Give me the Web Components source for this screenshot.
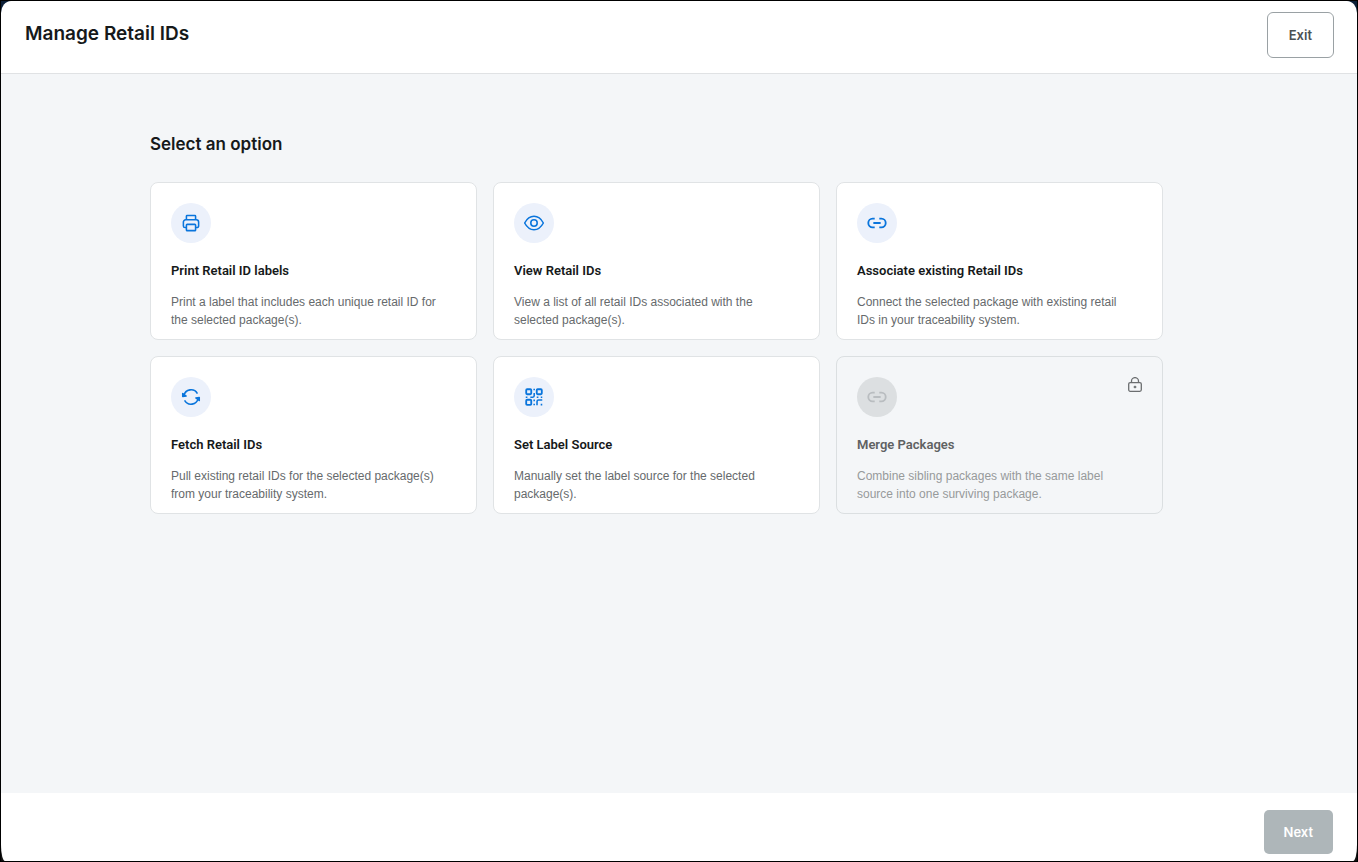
<!DOCTYPE html>
<html lang="en">
<head>
<meta charset="utf-8">
<meta name="viewport" content="width=device-width, initial-scale=1">
<title>Manage Retail IDs</title>
<style>
body{
    margin:0;
    font-family:Inter, "Liberation Sans", sans-serif;
    color:#16191a;
    background-color:#0b1f38;
}
</style>
</head>
<body>
<retail-dialog>
    <span slot="title">Manage Retail IDs</span>
    <action-button slot="exit">Exit</action-button>
    <option-list>
        <span slot="heading">Select an option</span>
        <option-card icon="print">
            <span slot="title">Print Retail ID labels</span>
            Print a label that includes each unique retail ID for the selected package(s).
        </option-card>
        <option-card icon="eye">
            <span slot="title">View Retail IDs</span>
            View a list of all retail IDs associated with the selected package(s).
        </option-card>
        <option-card icon="link">
            <span slot="title">Associate existing Retail IDs</span>
            Connect the selected package with existing retail IDs in your traceability system.
        </option-card>
        <option-card icon="sync">
            <span slot="title">Fetch Retail IDs</span>
            Pull existing retail IDs for the selected package(s) from your traceability system.
        </option-card>
        <option-card icon="qr">
            <span slot="title">Set Label Source</span>
            Manually set the label source for the selected package(s).
        </option-card>
        <option-card icon="link" disabled>
            <span slot="title">Merge Packages</span>
            Combine sibling packages with the same label source into one surviving package.
        </option-card>
    </option-list>
    <action-button slot="next" disabled>Next</action-button>
</retail-dialog>

<script>
const icons={
    print:`<path d="M7 8V4.500a.75.75 0 0 1 .75-.75h8.500a.75.75 0 0 1 .75.75V8"/>
        <path d="M7 17H5.500a1.800 1.800 0 0 1-1.800-1.800V11A2.500 2.500 0 0 1 6.200 8.500h11.600a2.500 2.500 0 0 1 2.500 2.500v4.200a1.800 1.800 0 0 1-1.800 1.800H17"/>
        <rect x="7" y="13.500" width="10" height="6.800" rx=".8"/>`,
    eye:`<path d="M1.800 12C4.300 7.300 8 4.700 12 4.700s7.700 2.600 10.200 7.300c-2.500 4.700-6.200 7.300-10.200 7.300S4.300 16.700 1.800 12Z"/>
        <circle cx="12" cy="12" r="3.500"/>`,
    link:`<path stroke-width="2" d="M9.500 7.300H7.200a4.700 4.700 0 0 0 0 9.400h2.300M14.500 7.300h2.300a4.700 4.700 0 0 1 0 9.400h-2.300M8 12h8"/>`,
    sync:`<path d="M4.200 10.500A8 8 0 0 1 19 8.200M19.800 13.500A8 8 0 0 1 5 15.800"/>
        <path fill="currentColor" d="M3 8.200v3.300l3.700-.5ZM21 15.800v-3.300l-3.700.5Z"/>`,
    qr:`<g stroke-width="2"><rect x="3.500" y="3.500" width="5.500" height="5.500" rx="1"/>
        <rect x="15" y="3.500" width="5.500" height="5.500" rx="1"/>
        <rect x="3.500" y="15" width="5.500" height="5.500" rx="1"/></g>
        <path d="M12.200 3v1.600M12.200 7.500v3.200a1.500 1.500 0 0 1-1.500 1.500H8M3 12.200h1.800M15 12.200h1.800M19.400 12.200H21M12.200 14.800v1.700M12.200 19.300V21M15.300 21v-4a1.700 1.700 0 0 1 1.700-1.700h4M19.300 20.300H21"/>`
};

const buttonTemplate=document.createElement("template");
buttonTemplate.innerHTML=`
<style>
:host{
    display:block;
}
button{
    display:block;
    height:46px;
    padding:0 21px;
    border:1px solid #9aa1a4;
    border-radius:6px;
    background-color:#fff;
    color:#4a5154;
    font:600 13px/20px Inter, "Liberation Sans", sans-serif;
    cursor:pointer;
}
button:disabled{
    height:44px;
    padding:0 20px;
    border:0;
    border-radius:5px;
    background-color:#aeb6b9;
    color:#fff;
    cursor:default;
}
</style>
<button type="button"><slot></slot></button>`;

class ActionButton extends HTMLElement{
    constructor(){
        super();
        this.attachShadow({mode:'open'});
        this.shadowRoot.appendChild(buttonTemplate.content.cloneNode(true));
        this.shadowRoot.querySelector('button').disabled=this.hasAttribute('disabled');
    }
}

const cardTemplate=document.createElement("template");
cardTemplate.innerHTML=`
<style>
:host{
    display:grid;
}
button{
    display:flex;
    flex-direction:column;
    align-items:stretch;
    justify-content:flex-start;
    padding:20px 20px 10px;
    border:1px solid #e0e3e5;
    border-radius:8px;
    background-color:#fff;
    color:#16191a;
    font-family:"Liberation Sans", Arial, sans-serif;
    text-align:left;
    cursor:pointer;
}
.top{
    display:flex;
    justify-content:space-between;
    align-items:flex-start;
    margin-bottom:18px;
}
.circle{
    display:flex;
    align-items:center;
    justify-content:center;
    width:40px;
    height:40px;
    border-radius:50%;
    background-color:#ecf1fb;
    color:#0a75dc;
}
svg{
    display:block;
    fill:none;
    stroke:currentColor;
    stroke-width:1.700;
    stroke-linejoin:round;
}
.lock{
    display:none;
    color:#6b6e70;
}
.title{
    margin-bottom:12px;
    font-family:Roboto, "Liberation Sans", sans-serif;
    font-size:13px;
    line-height:20px;
    font-weight:600;
}
.text{
    padding-right:12px;
    font-size:12px;
    line-height:18px;
    color:#666a6c;
}
button:disabled{
    background-color:#f4f6f8;
    border-color:#dbdfe1;
    color:#5f6263;
    cursor:default;
}
button:disabled .circle{
    background-color:#dcdfe1;
    color:#b9bdc0;
}
button:disabled .lock{
    display:block;
}
button:disabled .text{
    color:#979a9b;
}
</style>
<button type="button">
    <span class="top">
        <span class="circle"><svg class="icon" width="22" height="22" viewBox="0 0 24 24" aria-hidden="true"></svg></span>
        <svg class="lock" width="14" height="15" viewBox="0 0 14 15" aria-hidden="true">
            <g stroke-width="1.300">
                <rect x=".7" y="5.600" width="12.600" height="8.700" rx="1.500"/>
                <path d="M3.500 5.600V4.100a3.500 3.500 0 0 1 7 0v1.500M7 8.700v2.600M5.700 10h2.600"/>
            </g>
        </svg>
    </span>
    <span class="title"><slot name="title"></slot></span>
    <span class="text"><slot></slot></span>
</button>`;

class OptionCard extends HTMLElement{
    constructor(){
        super();
        this.attachShadow({mode:'open'});
        this.shadowRoot.appendChild(cardTemplate.content.cloneNode(true));
        this.shadowRoot.querySelector('.icon').innerHTML=icons[this.getAttribute('icon')];
        this.shadowRoot.querySelector('button').disabled=this.hasAttribute('disabled');
    }
}

const listTemplate=document.createElement("template");
listTemplate.innerHTML=`
<style>
:host{
    display:block;
    padding:58px 194px 58px 149px;
}
h2{
    margin:0 0 26px;
    font-size:17px;
    line-height:24px;
    font-weight:600;
}
.grid{
    display:grid;
    grid-template-columns:repeat(3, 1fr);
    gap:16px;
}
@media (max-width:1000px){
    :host{
        padding:32px 24px;
    }
    .grid{
        grid-template-columns:repeat(auto-fill, minmax(260px, 1fr));
    }
}
</style>
<h2><slot name="heading"></slot></h2>
<div class="grid"><slot></slot></div>`;

class OptionList extends HTMLElement{
    constructor(){
        super();
        this.attachShadow({mode:'open'});
        this.shadowRoot.appendChild(listTemplate.content.cloneNode(true));
    }
}

const dialogTemplate=document.createElement("template");
dialogTemplate.innerHTML=`
<style>
:host{
    display:flex;
    box-sizing:border-box;
    min-height:100vh;
    border:1px solid #000;
    background:linear-gradient(#0b1f38, #111);
}
.dialog{
    flex:1;
    display:flex;
    flex-direction:column;
    border-radius:10px 10px 4px 4px / 12px 12px 16px 16px;
    overflow:hidden;
    background-color:#fff;
}
header{
    display:flex;
    justify-content:space-between;
    align-items:flex-start;
    padding:11px 23px 15px 24px;
    border-bottom:1px solid #e0e2e4;
}
h1{
    margin:0;
    font-size:19px;
    line-height:44px;
    font-weight:600;
}
main{
    flex:1;
    background-color:#f4f6f8;
}
footer{
    display:flex;
    justify-content:flex-end;
    padding:17px 24px 7px;
}
</style>
<div class="dialog">
    <header>
        <h1><slot name="title"></slot></h1>
        <slot name="exit"></slot>
    </header>
    <main><slot></slot></main>
    <footer><slot name="next"></slot></footer>
</div>`;

class RetailDialog extends HTMLElement{
    constructor(){
        super();
        this.attachShadow({mode:'open'});
        this.shadowRoot.appendChild(dialogTemplate.content.cloneNode(true));
    }
}

window.customElements.define("action-button",ActionButton);
window.customElements.define("option-card",OptionCard);
window.customElements.define("option-list",OptionList);
window.customElements.define("retail-dialog",RetailDialog);
</script>
</body>
</html>
